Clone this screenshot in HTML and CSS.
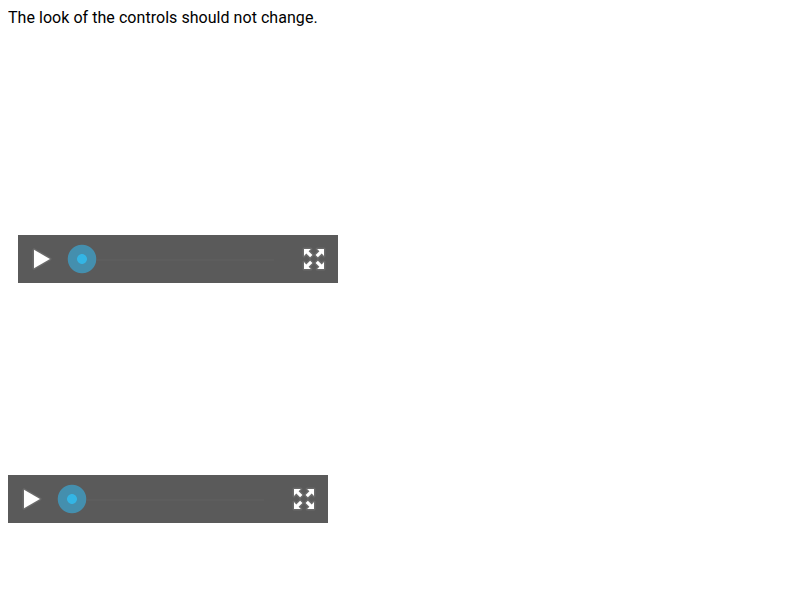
FILE: index.html
```html
<!DOCTYPE html>
<html lang="en">
<head>
<meta charset="utf-8">
<title>Media controls</title>
<link rel="stylesheet" href="styles.css">
</head>
<body>
<p class="note">The look of the controls should not change.</p>
<div class="video video-offset">
  <div class="controls">
    <svg class="icon" viewBox="0 0 48 48">
      <path class="glow" d="M16 14.8 32 24 16 33.3Z"/>
    </svg>
    <div class="timeline"><span class="thumb"></span><span class="track"></span></div>
    <svg class="icon" viewBox="0 0 48 48">
      <g transform="translate(24 24)">
        <path class="glow" d="M-10-10H-3.1L-5.4-7.8-1.6-4-3.9-1.7-7.7-5.5-10-3.1Z"/>
        <path class="glow" transform="scale(-1 1)" d="M-10-10H-3.1L-5.4-7.8-1.6-4-3.9-1.7-7.7-5.5-10-3.1Z"/>
        <path class="glow" transform="scale(1 -1)" d="M-10-10H-3.1L-5.4-7.8-1.6-4-3.9-1.7-7.7-5.5-10-3.1Z"/>
        <path class="glow" transform="scale(-1 -1)" d="M-10-10H-3.1L-5.4-7.8-1.6-4-3.9-1.7-7.7-5.5-10-3.1Z"/>
      </g>
    </svg>
  </div>
</div>
<div class="video">
  <div class="controls">
    <svg class="icon" viewBox="0 0 48 48">
      <path class="glow" d="M16 14.8 32 24 16 33.3Z"/>
    </svg>
    <div class="timeline"><span class="thumb"></span><span class="track"></span></div>
    <svg class="icon" viewBox="0 0 48 48">
      <g transform="translate(24 24)">
        <path class="glow" d="M-10-10H-3.1L-5.4-7.8-1.6-4-3.9-1.7-7.7-5.5-10-3.1Z"/>
        <path class="glow" transform="scale(-1 1)" d="M-10-10H-3.1L-5.4-7.8-1.6-4-3.9-1.7-7.7-5.5-10-3.1Z"/>
        <path class="glow" transform="scale(1 -1)" d="M-10-10H-3.1L-5.4-7.8-1.6-4-3.9-1.7-7.7-5.5-10-3.1Z"/>
        <path class="glow" transform="scale(-1 -1)" d="M-10-10H-3.1L-5.4-7.8-1.6-4-3.9-1.7-7.7-5.5-10-3.1Z"/>
      </g>
    </svg>
  </div>
</div>
</body>
</html>
```
FILE: styles.css
```css
body {
  margin: 8px;
  background: #fff;
  color: #000;
  font: 400 16px/19px Roboto, sans-serif;
  letter-spacing: 0.045px;
}

.note {
  margin: 0 0 16px;
}

.video {
  display: flex;
  align-items: flex-end;
  width: 320px;
  height: 240px;
}

.video-offset {
  margin-left: 10px;
}

.controls {
  display: flex;
  align-items: center;
  width: 320px;
  height: 48px;
  background: #5a5a5a;
}

.icon {
  flex: none;
  width: 48px;
  height: 48px;
  fill: #fff;
}

.glow {
  stroke: #fff;
  stroke-opacity: 0.1;
  stroke-width: 3;
  stroke-linejoin: round;
  paint-order: stroke;
}

.timeline {
  display: flex;
  flex: 1;
  align-items: center;
  padding: 0 16px 0 1px;
}

.thumb {
  flex: none;
  width: 30px;
  height: 30px;
  background: radial-gradient(circle, #33b5e5 4.5px, #448fae 5.3px, #448fae 13.8px, transparent 14.7px);
}

.track {
  flex: 1;
  height: 2px;
  margin-top: 2px;
  background: #5d5d5d;
}
```
